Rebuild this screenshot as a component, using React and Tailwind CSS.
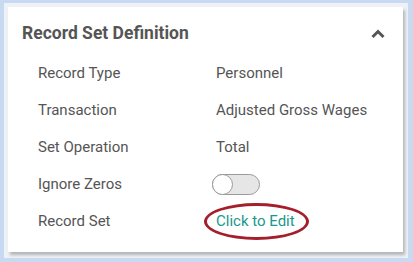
export default function App() {
  const rows = [
    { label: "Record Type", value: "Personnel" },
    { label: "Transaction", value: "Adjusted Gross Wages" },
    { label: "Set Operation", value: "Total" },
  ];

  return (
    <div className="w-[413px] h-[262px] bg-[#c7daf1] pl-[4px] pt-[3px] font-['Roboto',sans-serif]">
      <div className="w-[404px] h-[255px] bg-[#eef1f5] pl-[4px] pt-[4px]">
        <div className="w-[395px] h-[245px] bg-white shadow-[2px_3px_3px_rgba(0,0,0,0.25)] flex flex-col">
          <div className="flex items-center justify-between h-[24px] mt-[14px] pl-[14px] pr-[18px]">
            <span className="text-[17.5px] font-bold text-[#555555]">Record Set Definition</span>
            <svg width="14" height="10" viewBox="0 0 14 10" className="mt-[1px]">
              <path d="M1.5 8 L7 2.5 L12.5 8" fill="none" stroke="#555555" strokeWidth="3" />
            </svg>
          </div>
          <div className="flex flex-col mt-[10px] pl-[30px] text-[15px] text-[#555555]">
            {rows.map((r) => (
              <div key={r.label} className="flex items-center h-[37px]">
                <span className="w-[178px]">{r.label}</span>
                <span>{r.value}</span>
              </div>
            ))}
            <div className="flex items-center h-[37px]">
              <span className="w-[174px]">Ignore Zeros</span>
              <div className="relative w-[48px] h-[21px] rounded-full bg-[#e6e6e6] border border-[#9a9a9a]">
                <div className="absolute left-[-1px] top-[-1px] w-[21px] h-[21px] rounded-full bg-white border border-[#9a9a9a]" />
              </div>
            </div>
            <div className="flex items-center h-[37px]">
              <span className="w-[166px]">Record Set</span>
              <div className="w-[105px] h-[37px] rounded-[50%] border-[3px] border-[#a41f2b] flex items-center pl-[9px]">
                <span className="text-[#17998b]">Click to Edit</span>
              </div>
            </div>
          </div>
        </div>
      </div>
    </div>
  );
}
